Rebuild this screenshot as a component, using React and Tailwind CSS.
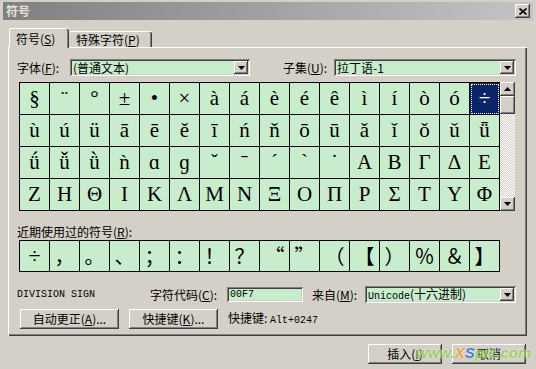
import React from "react";

const raised =
    "bg-[#d4d0c8] shadow-[inset_-1px_-1px_#404040,inset_1px_1px_#ffffff,inset_-2px_-2px_#808080,inset_2px_2px_#d4d0c8]";
const sunken =
    "bg-[#c7edcc] shadow-[inset_1px_1px_#808080,inset_-1px_-1px_#ffffff,inset_2px_2px_#404040,inset_-2px_-2px_#d4d0c8]";
const mono = "font-['Liberation_Mono',monospace] text-[10px]";
const serif = "font-['Liberation_Serif','DejaVu_Serif',serif]";

const rows = [
    ["§", "¨", "°", "±", "•", "×", "à", "á", "è", "é", "ê", "ì", "í", "ò", "ó", "÷"],
    ["ù", "ú", "ü", "ā", "ē", "ě", "ī", "ń", "ň", "ō", "ū", "ǎ", "ǐ", "ǒ", "ǔ", "ǖ"],
    ["ǘ", "ǚ", "ǜ", "ǹ", "ɑ", "ɡ", "ˇ", "ˉ", "ˊ", "ˋ", "˙", "Α", "Β", "Γ", "Δ", "Ε"],
    ["Ζ", "Η", "Θ", "Ι", "Κ", "Λ", "Μ", "Ν", "Ξ", "Ο", "Π", "Ρ", "Σ", "Τ", "Υ", "Φ"],
];

const recent = ["÷", "，", "。", "、", "；", "：", "！", "？", "“", "”", "（", "【", "）", "％", "＆", "】"];

const DownArrow = () => (
    <svg width="7" height="4" viewBox="0 0 7 4">
        <path d="M0 0h7L3.5 4z" fill="#000" />
    </svg>
);

const UpArrow = () => (
    <svg width="7" height="4" viewBox="0 0 7 4">
        <path d="M0 4h7L3.5 0z" fill="#000" />
    </svg>
);

const Combo = ({ width, children }) => (
    <div className={`${sunken} ${width} h-[17px] flex items-center pl-[3px] pr-[2px]`}>
        <span className="flex-1 whitespace-nowrap">{children}</span>
        <div className={`${raised} w-[14px] h-[13px] flex items-center justify-center`}>
            <DownArrow />
        </div>
    </div>
);

const Button = ({ width, children }) => (
    <div className={`${raised} ${width} h-[20px] flex items-center justify-center whitespace-nowrap`}>
        {children}
    </div>
);

const App = () => {
    return (
        <div className="w-[536px] h-[369px] bg-[#d4d0c8] relative overflow-hidden text-[12px] leading-none text-black font-['Noto_Sans_CJK_SC',sans-serif] pl-[3px] pt-[2px]">
            {/* Title bar */}
            <div className="w-[530px] h-[18px] flex items-center justify-between pl-[3px] pr-[3px] bg-linear-to-r from-[#808080] to-[#c4c4c4]">
                <span className="font-bold text-[#e4e1da] text-[12px]">符号</span>
                <div className={`${raised} w-[15px] h-[14px] flex items-center justify-center`}>
                    <svg width="8" height="7" viewBox="0 0 8 7">
                        <path d="M0.5 0.5l7 6M7.5 0.5l-7 6" stroke="#000" strokeWidth="1.6" />
                    </svg>
                </div>
            </div>

            {/* Tabs */}
            <div className="flex items-end ml-[6px] mt-[8px] relative z-10 -mb-px">
                <div className="w-[60px] h-[20px] bg-[#d4d0c8] rounded-t-[2px] border-t border-l border-white shadow-[inset_-1px_0_#404040,inset_-2px_0_#808080] flex items-center pl-[6px]">
                    符号(<u>S</u>)
                </div>
                <div className="w-[83px] h-[17px] bg-[#d4d0c8] rounded-t-[2px] border-t border-white shadow-[inset_-1px_0_#404040,inset_-2px_0_#808080] flex items-center pl-[7px] border-b border-b-white">
                    特殊字符(<u>P</u>)
                </div>
            </div>

            {/* Panel */}
            <div className="ml-[5px] w-[519px] h-[289px] bg-[#d4d0c8] shadow-[inset_1px_1px_#ffffff,inset_-1px_-1px_#404040,inset_-2px_-2px_#808080] pl-[9px] pt-[12px]">
                <div className="flex items-center h-[17px]">
                    <span className="w-[53px]">
                        字体(<u>F</u>):
                    </span>
                    <Combo width="w-[180px]">(普通文本)</Combo>
                    <span className="ml-[33px] w-[51px]">
                        子集(<u>U</u>):
                    </span>
                    <Combo width="w-[182px]">拉丁语-1</Combo>
                </div>

                {/* Symbol grid */}
                <div className="flex mt-[6px] ml-[2px]">
                    <div className="border-t border-l border-black bg-[#c7edcc]">
                        {rows.map((row, r) => (
                            <div key={r} className="flex">
                                {row.map((ch, c) => {
                                    const sel = r === 0 && c === 15;
                                    return (
                                        <div
                                            key={c}
                                            className={`w-[30px] h-[32px] border-r border-b border-black flex items-center justify-center ${serif} text-[21px] ${
                                                sel
                                                    ? "bg-[#0a246a] text-white outline-1 outline-dotted outline-white -outline-offset-2"
                                                    : ""
                                            }`}
                                        >
                                            {ch}
                                        </div>
                                    );
                                })}
                            </div>
                        ))}
                    </div>
                    <div className="w-[15px] h-[129px] flex flex-col bg-[repeating-conic-gradient(#d4d0c8_0%_25%,#ffffff_0%_50%)] bg-[length:2px_2px]">
                        <div className={`${raised} h-[14px] flex items-center justify-center`}>
                            <UpArrow />
                        </div>
                        <div className={`${raised} h-[18px]`}></div>
                        <div className="flex-1"></div>
                        <div className={`${raised} h-[14px] flex items-center justify-center`}>
                            <DownArrow />
                        </div>
                    </div>
                </div>

                <div className="mt-[14px] h-[14px] flex items-center">
                    近期使用过的符号(<u>R</u>):
                </div>

                {/* Recent symbols */}
                <div className="flex mt-[1px] ml-[2px] border-t border-l border-black bg-[#c7edcc] w-[481px]">
                    {recent.map((ch, i) => (
                        <div
                            key={i}
                            className={`w-[30px] h-[31px] border-r border-b border-black flex items-center justify-center ${
                                i === 0 ? `${serif} text-[22px]` : "text-[20px]"
                            }`}
                        >
                            {ch}
                        </div>
                    ))}
                </div>

                {/* Info row */}
                <div className="flex items-center h-[17px] mt-[14px]">
                    <span className={`${mono} w-[133px]`}>DIVISION SIGN</span>
                    <span className="w-[77px]">
                        字符代码(<u>C</u>):
                    </span>
                    <div className={`${sunken} w-[76px] h-[15px] flex items-center pl-[3px] ${mono}`}>00F7</div>
                    <span className="ml-[9px] w-[53px]">
                        来自(<u>M</u>):
                    </span>
                    <Combo width="w-[151px]">
                        <span className={mono}>Unicode</span>(十六进制)
                    </Combo>
                </div>

                {/* Buttons row */}
                <div className="flex items-center mt-[6px] ml-[3px]">
                    <Button width="w-[99px]">
                        自动更正(<u>A</u>)...
                    </Button>
                    <div className="ml-[10px]">
                        <Button width="w-[89px]">
                            快捷键(<u>K</u>)...
                        </Button>
                    </div>
                    <span className="ml-[10px] whitespace-nowrap">
                        快捷键: <span className={mono}>Alt+0247</span>
                    </span>
                </div>
            </div>

            {/* Dialog buttons */}
            <div className="flex ml-[365px] mt-[8px] gap-[10px]">
                <Button width="w-[74px]">
                    插入(<u>I</u>)
                </Button>
                <Button width="w-[74px]">取消</Button>
            </div>

            {/* Watermark */}
            <div className="absolute left-[416px] top-[345px] whitespace-nowrap font-['Liberation_Sans',sans-serif] font-bold italic text-[15px] text-[#8fd14f] opacity-80 [text-shadow:0_0_2px_#ffffff]">
                www.<span className="text-[#f39a1c]">X</span>
                <span className="text-[#2a6bd1]">S</span>pic.com
            </div>
        </div>
    );
};

export default App;
